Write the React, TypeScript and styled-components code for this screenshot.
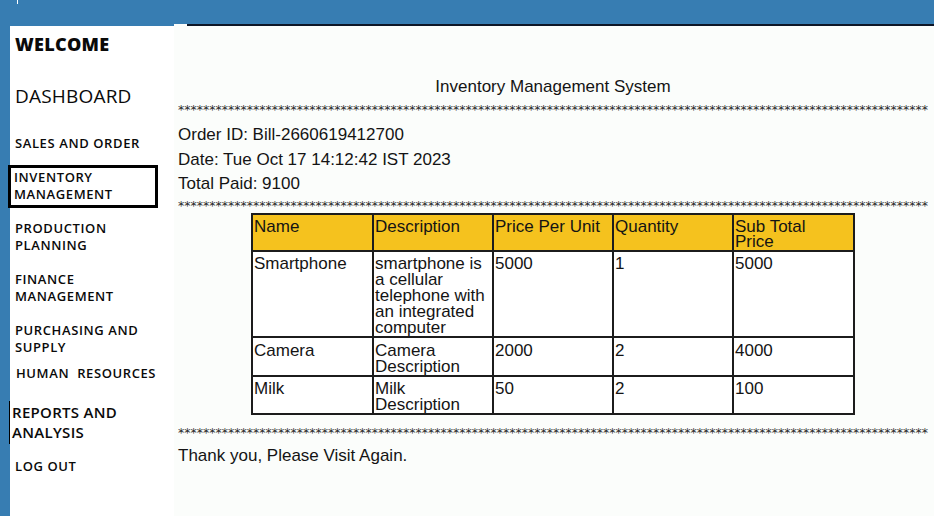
import styled, { createGlobalStyle } from 'styled-components';

const GlobalStyle = createGlobalStyle`
  html, body {
    margin: 0;
    padding: 0;
    background: #377db2;
  }
  #root {
    width: 934px;
    height: 516px;
    overflow: hidden;
  }
`;

const Page = styled.div`
  display: flex;
  flex-direction: column;
  width: 934px;
  height: 516px;
  background-color: #377db2;
`;

const TopBar = styled.header`
  height: 24px;
  flex-shrink: 0;
  position: relative;
`;

const Tick = styled.span`
  position: absolute;
  left: 17px;
  top: 0;
  width: 1px;
  height: 4px;
  background: #ffffff;
`;

const Body = styled.div`
  display: flex;
  flex: 1;
  padding-left: 10px;
  min-height: 0;
`;

const Sidebar = styled.nav`
  width: 164px;
  flex-shrink: 0;
  margin-top: 2px;
  background-color: #ffffff;
  padding: 8px 0 0 5px;
  box-sizing: border-box;
  display: flex;
  flex-direction: column;
  font-family: 'Open Sans', 'DejaVu Sans', sans-serif;
  color: #0a0a0a;
`;

const Welcome = styled.div`
  font-size: 18px;
  font-weight: 800;
  line-height: 20px;
  letter-spacing: 0.3px;
`;

const Dashboard = styled.div`
  margin-top: 30px;
  font-size: 19px;
  font-weight: 400;
  line-height: 24px;
  letter-spacing: 0.2px;
`;

const NavItem = styled.div<{ $gap: number; $active?: boolean; $large?: boolean; $indent?: number }>`
  margin-top: ${({ $gap }) => $gap}px;
  font-size: ${({ $large }) => ($large ? 15 : 13)}px;
  line-height: ${({ $large }) => ($large ? 20 : 17)}px;
  font-weight: 600;
  letter-spacing: 0.6px;
  text-transform: uppercase;
  white-space: pre-line;
  padding-left: ${({ $indent }) => $indent ?? 0}px;

  ${({ $active }) =>
    $active &&
    `
    margin-left: -7px;
    width: 150px;
    box-sizing: border-box;
    border: 3px solid #000;
    padding: 1px 0 2px 3px;
  `}

  ${({ $large }) =>
    $large &&
    `
    margin-left: -6px;
    border-left: 1px solid #000;
    padding: 1px 0 2px 2px;
    letter-spacing: 0.3px;
  `}
`;

const Main = styled.main`
  flex: 1;
  min-width: 0;
  overflow: hidden;
  background-color: #fbfdfb;
  display: flex;
  flex-direction: column;
  padding: 0 6px 0 4px;
  font-family: 'Liberation Sans', Arial, sans-serif;
  color: #141414;
`;

const TopRule = styled.div`
  height: 2px;
  margin: 0 -6px 0 9px;
  background-color: #0d1626;
`;

const Title = styled.div`
  margin-top: 49px;
  font-size: 17px;
  line-height: 24px;
  text-align: center;
`;

const Stars = styled.div<{ $gap: number }>`
  margin-top: ${({ $gap }) => $gap}px;
  font-family: 'DejaVu Sans', sans-serif;
  font-size: 12.5px;
  line-height: 10px;
  height: 10px;
  white-space: nowrap;
  color: #2a2a2a;
`;

const InfoLine = styled.div<{ $gap?: number }>`
  margin-top: ${({ $gap }) => $gap ?? 0}px;
  font-size: 17px;
  line-height: 24.5px;
`;

const Table = styled.table`
  margin: 2px auto 0;
  width: 602px;
  table-layout: fixed;
  border-collapse: collapse;
  font-size: 17px;
  border: 2px solid #3a3a3a;
`;

const HeadCell = styled.th`
  background-color: #f5c21e;
  font-weight: 400;
  text-align: left;
  vertical-align: top;
  line-height: 15.5px;
  border: 2px solid #1c1c1c;
  padding: 4px 6px 0 1px;
`;

const Cell = styled.td`
  text-align: left;
  vertical-align: top;
  line-height: 16px;
  border: 2px solid #1c1c1c;
  padding: 4.5px 2px 0 1px;
  background-color: #ffffff;
`;

const Thanks = styled.div`
  margin-top: 6px;
  font-size: 17px;
  line-height: 24px;
`;

const STARS = '*'.repeat(120);

const navItems = [
  { label: 'SALES AND ORDER', gap: 27 },
  { label: 'INVENTORY\nMANAGEMENT', gap: 13, active: true },
  { label: 'PRODUCTION\nPLANNING', gap: 12 },
  { label: 'FINANCE\nMANAGEMENT', gap: 17 },
  { label: 'PURCHASING AND\nSUPPLY', gap: 17 },
  { label: 'HUMAN\u00a0\u00a0RESOURCES', gap: 9, indent: 1 },
  { label: 'REPORTS AND\nANALYSIS', gap: 19, large: true },
  { label: 'LOG OUT', gap: 14 },
];

const rows = [
  { name: 'Smartphone', desc: 'smartphone is a cellular telephone with an integrated computer', price: 5000, qty: 1 },
  { name: 'Camera', desc: 'Camera Description', price: 2000, qty: 2 },
  { name: 'Milk', desc: 'Milk Description', price: 50, qty: 2 },
];

export default function App() {
  return (
    <>
      <GlobalStyle />
      <Page>
        <TopBar>
          <Tick />
        </TopBar>
        <Body>
          <Sidebar>
            <Welcome>WELCOME</Welcome>
            <Dashboard>DASHBOARD</Dashboard>
            {navItems.map((item) => (
              <NavItem
                key={item.label}
                $gap={item.gap}
                $active={item.active}
                $large={item.large}
                $indent={item.indent}
              >
                {item.label}
              </NavItem>
            ))}
          </Sidebar>
          <Main>
            <TopRule />
            <Title>Inventory Management System</Title>
            <Stars $gap={6}>{STARS}</Stars>
            <InfoLine $gap={8}>Order ID: Bill-2660619412700</InfoLine>
            <InfoLine>Date: Tue Oct 17 14:12:42 IST 2023</InfoLine>
            <InfoLine>Total Paid: 9100</InfoLine>
            <Stars $gap={4}>{STARS}</Stars>
            <Table>
              <colgroup>
                <col style={{ width: 121 }} />
                <col style={{ width: 120 }} />
                <col style={{ width: 120 }} />
                <col style={{ width: 120 }} />
                <col style={{ width: 121 }} />
              </colgroup>
              <thead>
                <tr>
                  <HeadCell>Name</HeadCell>
                  <HeadCell>Description</HeadCell>
                  <HeadCell>Price Per Unit</HeadCell>
                  <HeadCell>Quantity</HeadCell>
                  <HeadCell>Sub Total Price</HeadCell>
                </tr>
              </thead>
              <tbody>
                {rows.map((r) => (
                  <tr key={r.name}>
                    <Cell>{r.name}</Cell>
                    <Cell>{r.desc}</Cell>
                    <Cell>{r.price}</Cell>
                    <Cell>{r.qty}</Cell>
                    <Cell>{r.price * r.qty}</Cell>
                  </tr>
                ))}
              </tbody>
            </Table>
            <Stars $gap={13}>{STARS}</Stars>
            <Thanks>Thank you, Please Visit Again.</Thanks>
          </Main>
        </Body>
      </Page>
    </>
  );
}
